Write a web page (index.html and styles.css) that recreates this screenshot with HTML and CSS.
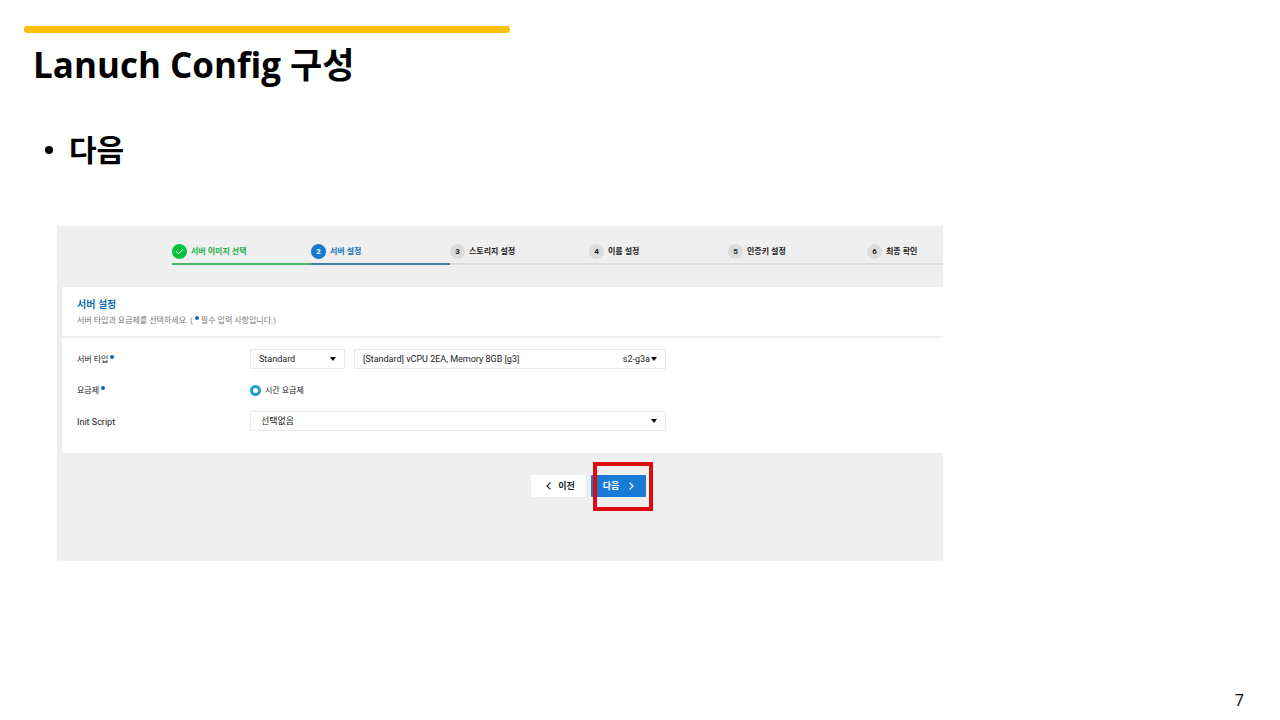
FILE: index.html
```html
<!DOCTYPE html>
<html lang="ko">
<head>
    <meta charset="UTF-8">
    <meta name="viewport" content="width=device-width, initial-scale=1.0">
    <title>Lanuch Config 구성</title>
    <link rel="stylesheet" href="styles.css">
</head>
<body>
    <div class="slide">
        <header class="slide-header">
            <div class="accent"></div>
            <h1 class="slide-title">Lanuch Config 구성</h1>
        </header>

        <ul class="bullets">
            <li>다음</li>
        </ul>

        <main class="console">
            <ol class="steps">
                <li class="step done">
                    <span class="step-num">
                        <svg width="9" height="7" viewBox="0 0 9 7" fill="none" stroke="#fff"><path d="M1 3.2 3.6 5.8 8.2 1"/></svg>
                    </span>
                    서버 이미지 선택
                </li>
                <li class="step current"><span class="step-num">2</span>서버 설정</li>
                <li class="step"><span class="step-num">3</span>스토리지 설정</li>
                <li class="step"><span class="step-num">4</span>이름 설정</li>
                <li class="step"><span class="step-num">5</span>인증키 설정</li>
                <li class="step"><span class="step-num">6</span>최종 확인</li>
            </ol>

            <form class="settings">
                <section class="panel">
                    <div class="panel-header">
                        <h2 class="panel-title">서버 설정</h2>
                        <p class="panel-desc">서버 타입과 요금제를 선택하세요. (<span class="required"></span> 필수 입력 사항입니다.)</p>
                    </div>
                    <div class="fields">
                        <div class="field">
                            <label class="field-label" for="server-type">서버 타입<span class="required"></span></label>
                            <div class="select type-select">
                                <select id="server-type">
                                    <option>Standard</option>
                                </select>
                                <svg class="arrow" width="6" height="4" viewBox="0 0 6 4"><path d="M0 0h6L3 4z"/></svg>
                            </div>
                            <div class="select spec-select">
                                <select id="server-spec" aria-label="서버 사양">
                                    <option>[Standard] vCPU 2EA, Memory 8GB [g3]</option>
                                </select>
                                <span class="arrow">s2-g3a<svg width="6" height="4" viewBox="0 0 6 4"><path d="M0 0h6L3 4z"/></svg></span>
                            </div>
                        </div>
                        <div class="field">
                            <span class="field-label" id="plan-label">요금제<span class="required"></span></span>
                            <label class="radio">
                                <input type="radio" name="plan" aria-describedby="plan-label" checked>
                                <span>시간 요금제</span>
                            </label>
                        </div>
                        <div class="field">
                            <label class="field-label label-latin" for="init-script">Init Script</label>
                            <div class="select script-select">
                                <select id="init-script">
                                    <option>선택없음</option>
                                </select>
                                <svg class="arrow" width="6" height="4" viewBox="0 0 6 4"><path d="M0 0h6L3 4z"/></svg>
                            </div>
                        </div>
                    </div>
                </section>

                <div class="actions">
                    <button type="button" class="btn">
                        <svg width="5" height="8" viewBox="0 0 5 8" fill="none" stroke="currentColor" stroke-width="1.2"><path d="M4.4.6 1 4l3.4 3.4"/></svg>
                        이전
                    </button>
                    <div class="marked">
                        <button type="button" class="btn btn-next">
                            다음
                            <svg width="5" height="8" viewBox="0 0 5 8" fill="none" stroke="currentColor" stroke-width="1.2"><path d="M.6.6 4 4 .6 7.4"/></svg>
                        </button>
                        <span class="highlight"></span>
                    </div>
                </div>
            </form>
        </main>

        <footer class="page-number">7</footer>
    </div>
</body>
</html>
```
FILE: styles.css
```css
* {
    box-sizing: border-box;
}

body {
    margin: 0;
    background: #fff;
    color: #000;
    font-family: "Open Sans", "Noto Sans CJK KR", sans-serif;
}

.slide {
    display: flex;
    flex-direction: column;
    min-height: 100vh;
    padding: 26px 24px 8px;
}

.accent {
    width: 100%;
    max-width: 486px;
    height: 7px;
    border-radius: 3px;
    background: #fcc00a;
}

.slide-title {
    margin: 8px 0 0 9px;
    font-size: 35px;
    line-height: 48px;
    font-weight: bold;
}

.bullets {
    margin: 40px 0 0;
    padding: 0 0 0 21px;
    list-style: none;
    font-size: 30px;
    line-height: 42px;
    font-weight: bold;
}

.bullets li {
    display: flex;
    align-items: center;
    gap: 16px;
}

.bullets li::before {
    content: "";
    width: 8px;
    height: 8px;
    border-radius: 50%;
    background: #000;
}

/* console */
.console {
    width: 100%;
    max-width: 886px;
    margin: 55px 0 0 33px;
    padding: 14px 0 50px 5px;
    background: #efefef;
    font-family: Roboto, "Noto Sans CJK KR", sans-serif;
    font-size: 9px;
    line-height: 12px;
    color: #222;
}

.steps {
    display: flex;
    margin: 0 0 22px 110px;
    padding: 0;
    list-style: none;
}

.step {
    display: flex;
    flex: 0 0 139px;
    align-items: center;
    gap: 4px;
    height: 25px;
    border-bottom: 2px solid #dedede;
    font-size: 8px;
    font-weight: bold;
}

.step:last-child {
    flex: 1;
}

.step-num {
    display: flex;
    align-items: center;
    justify-content: center;
    width: 15px;
    height: 15px;
    border-radius: 50%;
    background: #dcdcdc;
}

.step.done {
    color: #1cb04c;
    border-color: #43b764;
}

.step.done .step-num {
    background: #06c43c;
}

.step.current {
    color: #1571b8;
    border-color: #3a80a8;
}

.step.current .step-num {
    background: #167bd0;
    color: #fff;
}

/* form panel */
.panel {
    border-radius: 1px 0 0 1px;
    background: #fff;
}

.panel-header {
    padding: 11px 15px 9px;
    border-bottom: 2px solid #f0f0f0;
}

.panel-title {
    margin: 0;
    font-size: 10px;
    line-height: 14px;
    color: #0f6cae;
}

.panel-desc {
    margin: 3px 0 0;
    font-size: 8px;
    color: #777;
}

.required {
    display: inline-block;
    width: 4px;
    height: 4px;
    margin-left: 2px;
    border-radius: 50%;
    background: #0d67ac;
    vertical-align: 3px;
}

.fields {
    display: flex;
    flex-direction: column;
    gap: 11px;
    padding: 11px 15px 22px;
}

.field {
    display: flex;
    align-items: center;
    height: 20px;
}

.field-label {
    width: 173px;
    padding-top: 2px;
    font-size: 8px;
}

.label-latin {
    font-size: 9px;
}

.select {
    display: grid;
    align-items: center;
    height: 20px;
}

.select > * {
    grid-area: 1 / 1;
}

.select select {
    width: 100%;
    height: 20px;
    padding: 0 8px;
    border: 1px solid #e8e8e8;
    border-radius: 1px;
    background: #fff;
    color: #222;
    font: inherit;
    appearance: none;
}

.arrow {
    justify-self: end;
    margin-right: 9px;
    pointer-events: none;
}

span.arrow {
    display: flex;
    align-items: center;
    gap: 1px;
}

.type-select {
    width: 95px;
    margin-right: 9px;
}

.spec-select {
    width: 312px;
}

.script-select {
    width: 416px;
}

.script-select select {
    padding: 0 10px;
}

.radio {
    display: flex;
    align-items: center;
    gap: 4px;
    font-size: 8px;
}

.radio span {
    padding-top: 2px;
}

.radio input {
    width: 11px;
    height: 11px;
    margin: 0;
    border: 3px solid #1d9fd6;
    border-radius: 50%;
    background: #fff;
    appearance: none;
}

/* buttons */
.actions {
    display: flex;
    gap: 5px;
    padding: 22px 0 14px 469px;
}

.btn {
    display: flex;
    align-items: center;
    justify-content: center;
    gap: 7px;
    width: 55px;
    height: 22px;
    padding: 0 0 0 4px;
    border: 0;
    border-radius: 1px;
    background: #fff;
    color: #222;
    font: inherit;
    font-weight: bold;
}

.btn-next {
    gap: 10px;
    padding: 0;
    background: #187cd6;
    color: #fff;
}

.marked {
    position: relative;
}

.highlight {
    position: absolute;
    top: -13px;
    left: 2px;
    width: 60px;
    height: 49px;
    border: 4px solid #dc0c10;
    pointer-events: none;
}

.page-number {
    margin: auto 12px 0 0;
    font-size: 16px;
    line-height: 24px;
    text-align: right;
}
```
